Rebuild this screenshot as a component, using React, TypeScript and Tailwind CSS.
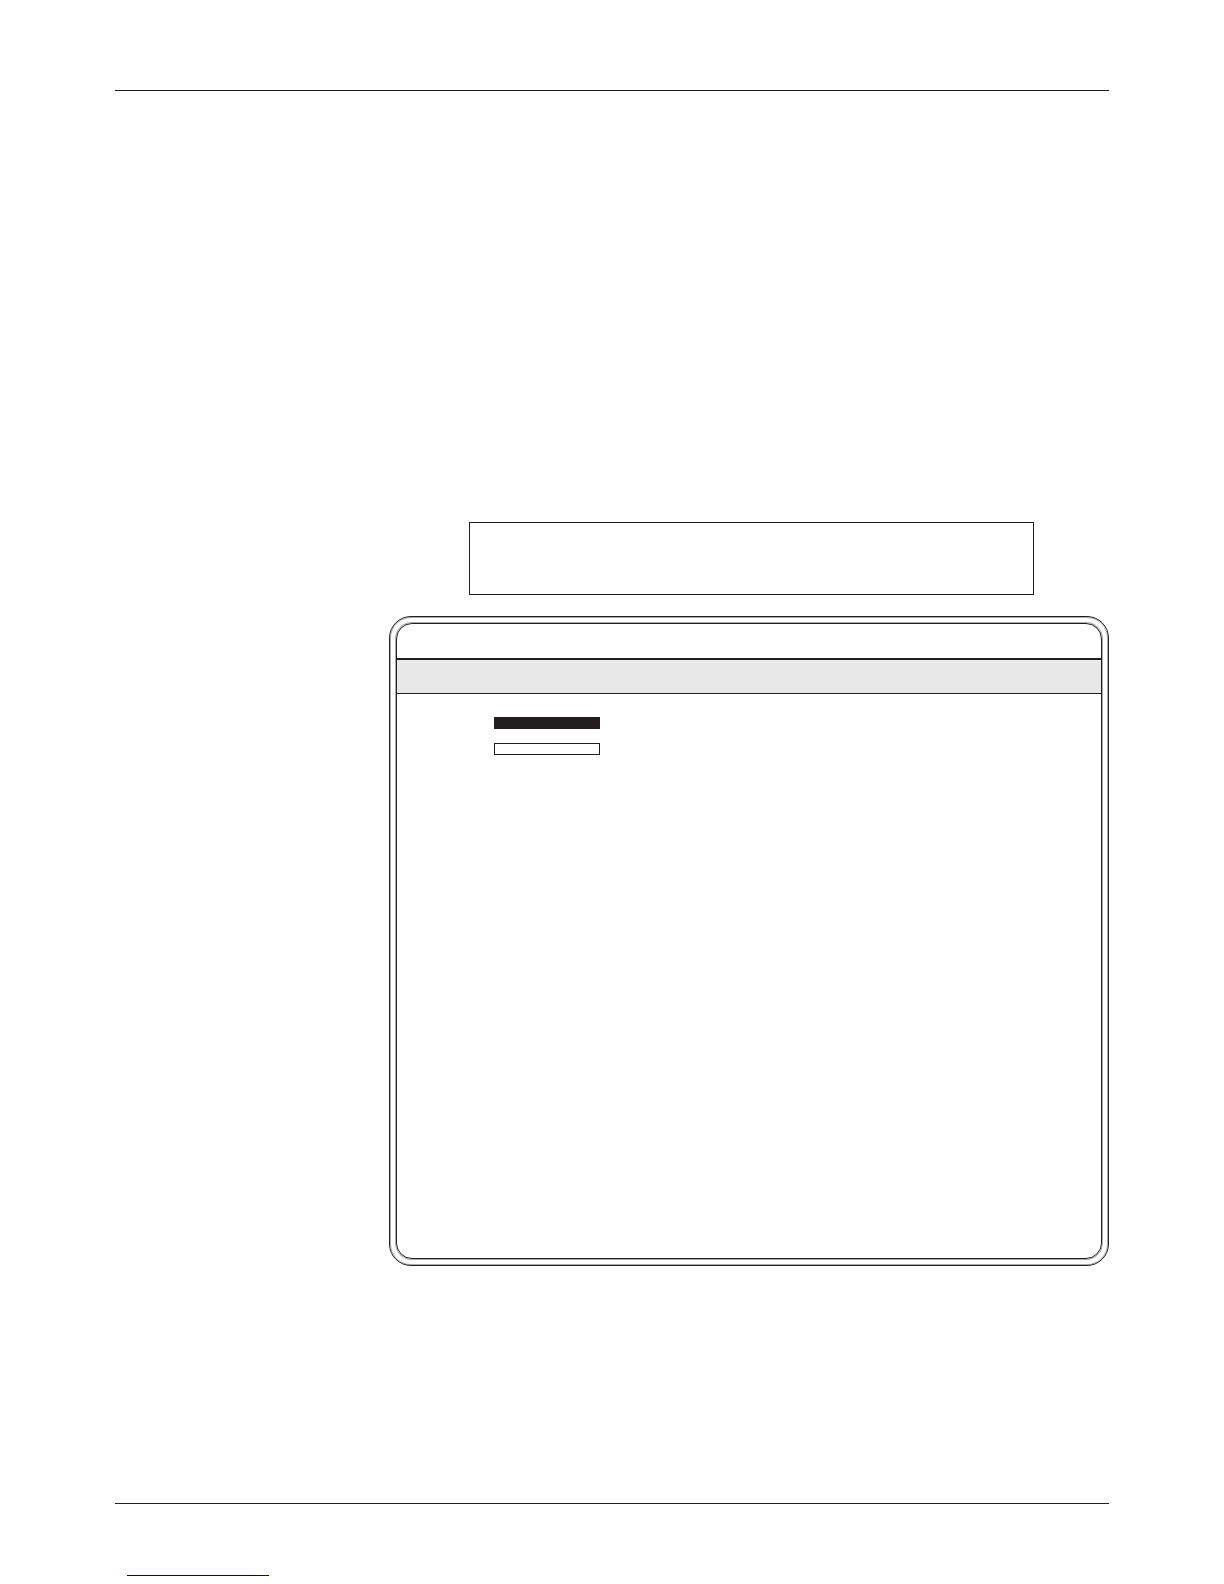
function Notice() {
  return <aside aria-label="Notice" className="ml-20 mr-[75px] min-h-[73px] border border-[#231f20]" />;
}

function Screen() {
  return (
    <section
      aria-label="Screen"
      className="mt-[21px] rounded-[22px] border border-[#231f20] p-1.5 shadow-[inset_0_0_0_1px_#231f2060]"
    >
      <div className="flex min-h-[636px] flex-col overflow-hidden rounded-[16px] border border-[#231f20] shadow-[0_0_0_1px_#231f2060]">
        <header className="min-h-[34px]" />
        <div className="min-h-9 border-t-2 border-b border-[#231f20] bg-[#e8e8e8]" />
        <div className="flex flex-col gap-[14px] pt-[23px] pl-[97px]">
          <div className="h-3 w-[106px] bg-[#231f20]" />
          <div className="h-3 w-[106px] border border-[#231f20]" />
        </div>
      </div>
    </section>
  );
}

export default function App() {
  return (
    <div className="flex min-h-screen flex-col bg-white px-[115px] pt-[90px] pb-2">
      <hr className="border-t border-[#231f20]" />
      <main className="grow pt-[431px] pl-[274px]">
        <Notice />
        <Screen />
      </main>
      <footer>
        <hr className="border-t border-[#231f20]" />
        <hr className="mt-[71px] ml-3 h-px w-[142px] border-0 bg-[#00008b]" />
      </footer>
    </div>
  );
}
